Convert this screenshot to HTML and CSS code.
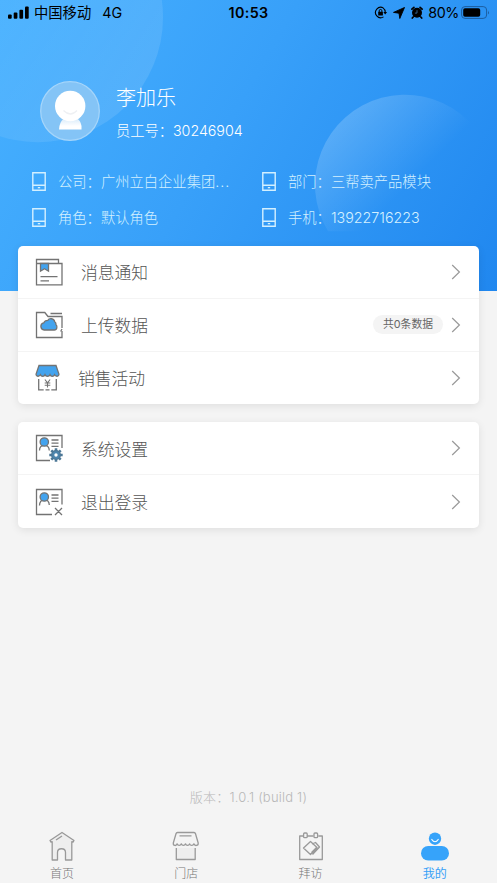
FILE: index.html
```html
<!DOCTYPE html>
<html lang="zh-CN">
<head>
<meta charset="utf-8">
<meta name="viewport" content="width=device-width, initial-scale=1">
<title>我的</title>
<link rel="stylesheet" href="styles.css">
</head>
<body>
<svg width="0" height="0" class="defs">
  <symbol id="phone" viewBox="0 0 14 19"><path d="M.8.8h12.4v17.4H.8zM.8 13.2h12.4" fill="none" stroke="currentColor" stroke-width="1.4"/><rect x="5.8" y="15" width="2.4" height="1.3" fill="currentColor"/></symbol>
  <symbol id="chevron" viewBox="0 0 10 16"><path d="M1.2 1l7.2 7-7.2 7" fill="none" stroke="currentColor" stroke-width="1.2"/></symbol>
</svg>
<div class="screen">
  <header class="hero">
    <svg class="hero-art" viewBox="0 0 497 290">
      <defs>
        <linearGradient id="c1" x1=".2" y1=".3" x2=".9" y2=".8"><stop offset="0" stop-color="#fff" stop-opacity=".02"/><stop offset="1" stop-color="#fff" stop-opacity=".11"/></linearGradient>
        <linearGradient id="c2" gradientUnits="userSpaceOnUse" x1="335" y1="125" x2="402" y2="192"><stop offset="0" stop-color="#fff" stop-opacity=".19"/><stop offset="1" stop-color="#fff" stop-opacity="0"/></linearGradient>
      </defs>
      <circle cx="38" cy="17" r="125" fill="url(#c1)"/>
      <path d="M328 231A90 90 0 1 1 495 186V231Z" fill="url(#c2)"/>
    </svg>
    <div class="status">
      <svg class="signal" width="21" height="13" viewBox="0 0 21 13"><rect y="8.5" width="3.7" height="4.2" rx="1"/><rect x="5.700" y="6.500" width="3.700" height="6.200" rx="1"/><rect x="11.400" y="3.800" width="3.700" height="8.900" rx="1"/><rect x="17" y=".5" width="3.700" height="12.200" rx="1"/></svg>
      <span class="carrier">中国移动</span><span class="network">4G</span>
      <span class="clock">10:53</span>
      <div class="status-right">
        <svg width="14" height="13" viewBox="0 0 14 13"><path d="M9.500 2.100A5.200 5.200 0 1 0 9.500 10.900M9 1.900A5.200 5.200 0 0 1 11.200 6.500" fill="none" stroke="#000" stroke-width="1.100"/><path d="M9.300 6h3.800l-1.900 2.600z"/><rect x="4.200" y="5.800" width="4.700" height="3.800" rx=".5"/><path d="M5.200 6V4.800a1.350 1.350 0 0 1 2.700 0V6" fill="none" stroke="#000"/></svg>
        <svg width="12" height="12" viewBox="0 0 12 12"><path d="M11.500.5L6.800 11.500 6 6.200.5 5.400z" stroke="#000" stroke-width=".9" stroke-linejoin="round"/></svg>
        <svg width="12" height="13" viewBox="0 0 12 13"><circle cx="6" cy="6.800" r="5"/><path d="M.9 3.200L2.900 1.400M9.100 1.400l2 1.800M2.200 11L1.300 12M9.800 11l.9 1" stroke="#000" stroke-width="1.700" stroke-linecap="round"/><path d="M6 4.200v2.900H3.900" fill="none" stroke="#35699b" stroke-width=".9"/></svg>
        <span class="percent">80%</span>
        <svg width="29" height="13" viewBox="0 0 29 13"><rect x=".6" y=".6" width="25" height="11.800" rx="3.400" fill="none" stroke="#1c5d9f"/><rect x="2.200" y="2.200" width="17" height="8.600" rx="1.800"/><path d="M27 4.500q1.800 2 0 4z" fill="#1c5d9f"/></svg>
      </div>
    </div>
    <section class="profile">
      <svg class="avatar" width="60" height="60" viewBox="0 0 60 60">
        <defs><linearGradient id="body" x2="0" y2="1"><stop offset="0" stop-color="#d5e9fa"/><stop offset=".7" stop-color="#fff"/></linearGradient></defs>
        <circle cx="30" cy="30" r="29.300" fill="#84c4f6" stroke="#a5d5fa" stroke-width="1.300"/>
        <path d="M24 37h13q5.500 5 4.500 11.500H19Q19 42 24 37Z" fill="url(#body)"/>
        <circle cx="30.200" cy="25" r="15.200" fill="#fff"/>
        <path d="M23.500 29.500q7 7 13.500 0" fill="none" stroke="#eef0f3" stroke-width="1.300"/>
      </svg>
      <div><h1>李加乐</h1><p>员工号：30246904</p></div>
    </section>
    <section class="facts">
      <div><svg width="14" height="19"><use href="#phone"/></svg><span>公司：广州立白企业集团<span class="dots">...</span></span></div>
      <div><svg width="14" height="19"><use href="#phone"/></svg><span>部门：三帮卖产品模块</span></div>
      <div><svg width="14" height="19"><use href="#phone"/></svg><span>角色：默认角色</span></div>
      <div><svg width="14" height="19"><use href="#phone"/></svg><span>手机：13922716223</span></div>
    </section>
  </header>
  <main>
    <section class="card">
      <div class="row">
        <svg class="icon" width="28" height="28" viewBox="0 0 28 28"><path d="M1.500 5.500V1.500h22v4M1.500 5.500h25.500v21.300H1.500z"/><path class="blue" d="M5.500 5.500h8v7.700l-4-2.400-4 2.400z"/><path d="M5.500 18.700h17M5.500 22.800h8.500"/></svg>
        <span class="label">消息通知</span><svg class="arrow" width="10" height="16"><use href="#chevron"/></svg>
      </div>
      <div class="row">
        <svg class="icon" width="28" height="28" viewBox="0 0 28 28"><path d="M27 20v6.500H1.500V1.500h8.300l3.200 4h14V17M15.500 2.500H27" /><path class="blue" d="M9.200 19a3.600 3.600 0 0 1-.5-7.100 4.300 4.300 0 0 1 4.200-2.600c1.200-2.400 6.300-2.200 6.800 1.500 1.500.8 1.400 2.200 1.300 3 1.500 1 1.300 5.200-1.700 5.200z"/><path d="M27 18l-1.300 2.500"/></svg>
        <span class="label">上传数据</span><span class="pill">共0条数据</span><svg class="arrow" width="10" height="16"><use href="#chevron"/></svg>
      </div>
      <div class="row">
        <svg class="icon" width="25" height="28" viewBox="0 0 25 28"><path class="blue" d="M4 1.500h17l3 8.800c0 2.500-3.400 2.500-4.400.5-.8 2-3.800 2-4.600 0-.8 2-4.200 2-5 0-.8 2-3.800 2-4.600 0C4.400 12.800 1 12.800 1 10.300z"/><path d="M3.700 15v10.800h5M21.300 15v10.800h-5M10.500 25.800h4"/><path d="M9.900 15.500l2.600 3.300 2.600-3.300M12.500 18.500v5M9.700 19h5.600M9.700 21.200h5.600" stroke-width="1.100"/></svg>
        <span class="label">销售活动</span><svg class="arrow" width="10" height="16"><use href="#chevron"/></svg>
      </div>
    </section>
    <section class="card">
      <div class="row">
        <svg class="icon" width="28" height="28" viewBox="0 0 28 28"><path d="M15 26.500H1.500V1.500H27V14"/><path d="M4.500 16.500q0-5 5-5.300 4.500.3 4.800 5.300"/><circle class="blue" cx="9.300" cy="8" r="4.200"/><path d="M16.500 6h7M16.500 9.200h7M16.500 12.300h7"/><path class="gear" d="M21 14.300v13.400M14.300 21h13.400M16.300 16.300l9.400 9.400M25.700 16.300l-9.400 9.400"/><circle cx="21" cy="21" r="4.300" class="gear-disc"/><circle cx="21" cy="21" r="1.700" class="gear-hole"/></svg>
        <span class="label">系统设置</span><svg class="arrow" width="10" height="16"><use href="#chevron"/></svg>
      </div>
      <div class="row">
        <svg class="icon" width="28" height="28" viewBox="0 0 28 28"><path d="M17 26.500H1.500V1.500H27v15"/><path d="M4.500 17.500q0-5 5-6.300 4.500 1 4.800 5.800"/><circle class="blue" cx="9.300" cy="9" r="4.200"/><path d="M16.500 7h7M16.500 10.200h7M16.500 13.300h7M20 20l7 7M27 20l-7 7"/></svg>
        <span class="label">退出登录</span><svg class="arrow" width="10" height="16"><use href="#chevron"/></svg>
      </div>
    </section>
  </main>
  <p class="version">版本：1.0.1 (build 1)</p>
  <nav class="tabs">
    <a><svg width="28" height="30" viewBox="0 0 28 30"><path d="M14 1.500L2 9.500l1 1.700 1.200-.5V29h5.300v-7.500c0-5 8-5 8 0V29h6.300V10.700l1.200.5 1-1.700z" fill="#eee"/><path d="M8 9l6-4"/></svg>首页</a>
    <a><svg width="28" height="30" viewBox="0 0 28 30"><path d="M4.300 17v11.500h18.900V17" fill="#eee"/><path d="M5.500 1.500h16.500q1.200 0 1.500 1.300L26.200 12c.3 3-3.500 3.300-4.300.8-.8 2.200-3.600 2.200-4.200 0-.8 2.200-3.500 2.200-4.200 0-.8 2.200-3.500 2.200-4.200 0-.8 2.200-3.500 2.200-4.200 0-.8 2.500-4.100 2.200-3.800-.8L4 2.800Q4.300 1.500 5.500 1.500zM7.500 4.800h12"/></svg>门店</a>
    <a><svg width="28" height="30" viewBox="0 0 28 30"><path d="M6.500 5H2.700v23.500h22.600V5h-4M10 5h6.500"/><rect x="6.600" y="2" width="3.600" height="4.700" rx="1"/><rect x="17" y="2" width="3.600" height="4.700" rx="1"/><path d="M6.500 17l7-6.500 6.500 6-6.500 7zM15 13l3.500-1.500 4 4.500-7 7.500"/><path d="M15 22l5-5" stroke-width="2.500"/></svg>拜访</a>
    <a class="active"><svg width="28" height="30" viewBox="0 0 28 30"><circle cx="14" cy="7.700" r="6.200"/><rect y="15" width="28" height="14.500" rx="7.200"/><path d="M10.800 8.500q3.200 4.500 6.400 0" class="smile"/></svg>我的</a>
  </nav>
</div>
</body>
</html>
```
FILE: styles.css
```css
* { box-sizing: border-box; }
body {
  margin: 0;
  background: #f4f4f4;
  font-family: Inter, "Noto Sans CJK SC", sans-serif;
  font-weight: 300;
}
h1, p { margin: 0; font-weight: inherit; }
svg { display: block; flex: none; }
.defs { position: absolute; }
.screen { height: 883px; display: flex; flex-direction: column; overflow: hidden; }

.hero {
  position: relative;
  height: 290.5px;
  flex: none;
  background: linear-gradient(120deg, #47b1ff 0%, #38a0f9 45%, #2087ef 100%);
  color: #fff;
}
.hero-art { position: absolute; inset: 0; width: 100%; height: 100%; }
.status, .profile, .facts { position: relative; }
.status {
  height: 25px;
  display: grid;
  grid-template-columns: 21px auto auto 1fr auto;
  align-items: center;
  padding: 0 7px 0 8px;
  color: #000;
  font-size: 14.3px;
  line-height: 20px;
  font-weight: 400;
}
.carrier { margin-left: 5px; }
.network { margin-left: 11px; }
.clock { position: absolute; left: 0; right: 0; text-align: center; font-weight: 600; letter-spacing: .4px; }
.status-right { grid-column: 5; display: flex; align-items: center; gap: 5.5px; }
.percent { margin-right: -3.5px; letter-spacing: -.4px; }

.profile { display: flex; align-items: center; gap: 16px; margin-top: 56px; padding-left: 40px; height: 60px; }
.profile h1 { font-size: 20px; line-height: 30px; margin-top: 3px; font-weight: 300; }
.profile p { font-size: 14.3px; line-height: 24px; margin-top: 6px; letter-spacing: -.05px; }

.facts {
  display: grid;
  grid-template-columns: 230px 1fr;
  grid-auto-rows: 36px;
  margin-top: 22px;
  padding-left: 32px;
  font-size: 14.3px;
  color: #d3f0ff;
  white-space: nowrap;
}
.facts div { display: flex; align-items: center; gap: 12px; }
.facts div > span { margin-bottom: 2px; }
.dots { letter-spacing: 1px; }

main { position: relative; margin-top: -44.5px; padding: 0 18px; display: grid; gap: 18px; }
.card { background: #fff; border-radius: 5px; box-shadow: 0 2px 8px rgba(0, 0, 0, .09); }
.row {
  height: 52.8px;
  display: flex;
  align-items: center;
  padding: 0 18px 0 17px;
  border-bottom: 1px solid #f4f4f4;
}
.row:last-child { border-bottom: 0; }
.icon { fill: none; stroke: #737373; stroke-width: 1.3; }
.blue { fill: #43a3ee; }
.gear { stroke: #4d7897; stroke-width: 2.6; }
.gear-disc { fill: #4d86ae; stroke: #4d7897; }
.gear-hole { fill: #fff; stroke: none; }
.label { margin: 1px auto 0 18px; font-size: 16.8px; color: #555; }
.arrow { color: #999; }
.pill {
  padding: 1px 10px 0;
  margin-right: 8px;
  height: 19px;
  line-height: 18px;
  border-radius: 10px;
  background: #f4f4f4;
  color: #666;
  font-size: 10.8px;
  font-weight: 400;
}

.version { margin-top: auto; height: 20px; line-height: 20px; text-align: center; font-size: 13px; letter-spacing: .2px; color: #b8b8b8; }
.tabs { display: grid; grid-template-columns: repeat(4, 1fr); height: 76px; padding-top: 24px; }
.tabs a { display: flex; flex-direction: column; align-items: center; font-size: 12px; line-height: 18px; gap: 4px; color: #777; }
.tabs svg { fill: none; stroke: #999; stroke-width: 1.3; stroke-linejoin: round; }
.tabs .active { color: #36a0f7; font-weight: 400; }
.tabs .active svg { fill: #36a3fa; stroke: none; }
.tabs .active .smile { fill: none; stroke: #fff; stroke-width: 1.2; stroke-linecap: round; }
```
